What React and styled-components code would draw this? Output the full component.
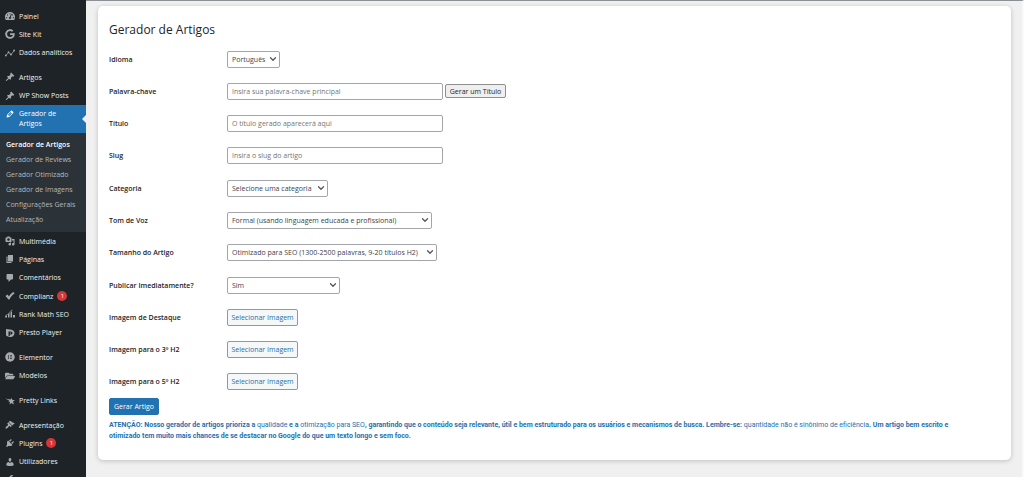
import styled, { createGlobalStyle } from "styled-components";
import { ChevronDown } from "lucide-react";
import { FaFolderOpen, FaGoogle, FaTachometerAlt, FaWrench } from "react-icons/fa";

const PIN =
  "M10.44 3.02l1.82-1.82 6.36 6.35-1.83 1.82c-1.05-.68-2.48-.57-3.41.36l-.75.75c-.92.93-1.04 2.35-.35 3.41l-1.83 1.82-2.41-2.41-2.8 2.79c-.42.42-3.38 2.71-3.8 2.29s1.86-3.39 2.28-3.81l2.79-2.79L4.1 9.36l1.83-1.82c1.05.69 2.48.57 3.4-.36l.75-.75c.93-.92 1.05-2.35.36-3.41z";
const PENCIL =
  "M13.89 3.39l2.71 2.72c.46.46.42 1.24.03 1.64l-8.01 8.02-5.56 1.16 1.16-5.58s7.6-7.63 7.99-8.03c.39-.39 1.22-.39 1.68.07zm-2.73 2.79l-5.59 5.61 1.11 1.11 5.54-5.65zm-2.97 8.23l5.58-5.6-1.07-1.08-5.59 5.6z";
const MEDIA =
  "M13 11V4c0-.55-.45-1-1-1h-1.67L9 1H5L3.67 3H2c-.55 0-1 .45-1 1v7c0 .55.45 1 1 1h10c.55 0 1-.45 1-1zM7 4.5c1.38 0 2.5 1.12 2.5 2.5S8.38 9.5 7 9.5 4.5 8.38 4.5 7 5.62 4.5 7 4.5zM14 6h5v10.5c0 1.38-1.12 2.5-2.5 2.5S14 17.88 14 16.5s1.12-2.5 2.5-2.5c.17 0 .34.02.5.05V9h-3V6zm-4 8.05V13h2v3.5c0 1.38-1.12 2.5-2.5 2.5S7 17.88 7 16.5 8.12 14 9.5 14c.17 0 .34.02.5.05z";
const PAGES = "M6 15V2h10v13H6zm-1 1h8v2H3V5h2v11z";
const COMMENT = "M5 2h9c1.1 0 2 .9 2 2v7c0 1.1-.9 2-2 2h-2l-5 5v-5H5c-1.1 0-2-.9-2-2V4c0-1.1.9-2 2-2z";
const BRUSH =
  "M14.48 11.06L7.41 3.99l1.5-1.5c.5-.56 2.3-.47 3.51.32 1.21.8 1.43 1.28 2.91 2.1 1.18.64 2.45 1.26 4.45.85zm-.71.71L6.7 4.7 4.93 6.47c-.39.39-.39 1.02 0 1.41l1.06 1.06c.39.39.39 1.03 0 1.42-.6.6-1.43 1.11-2.21 1.69-.35.26-.7.53-1.01.84C1.43 14.23.4 16.08 1.4 17.07c.99 1 2.84-.03 4.18-1.36.31-.31.58-.66.85-1.02.57-.78 1.08-1.61 1.69-2.21.39-.39 1.02-.39 1.41 0l1.06 1.06c.39.39 1.02.39 1.41 0z";
const PLUG =
  "M13.11 4.36L9.87 7.6 8 5.73l3.24-3.24c.35-.34 1.05-.2 1.56.32.52.51.66 1.21.31 1.55zm-8 1.77l.91-1.12 9.01 9.01-1.19.84c-.71.71-2.63 1.16-3.82 1.16H6.14L4.9 17.26c-.59.59-1.54.59-2.12 0-.59-.58-.59-1.53 0-2.12l1.24-1.24v-3.88c0-1.13.4-3.19 1.09-3.89zm7.26 3.97l3.24-3.24c.34-.35 1.04-.21 1.55.31.52.51.66 1.21.31 1.55l-3.24 3.25z";
const USER =
  "M10 9.25c-2.27 0-2.73-3.44-2.73-3.44C7 4.02 7.82 2 9.97 2c2.16 0 2.98 2.02 2.71 3.81 0 0-.41 3.44-2.68 3.44zm0 2.57L12.72 10c2.39 0 4.52 2.33 4.52 4.53v2.49s-3.65 1.13-7.24 1.13c-3.65 0-7.24-1.13-7.24-1.13v-2.49c0-2.25 1.94-4.48 4.47-4.48z";
const CHECK = "M1 10l4-3 3 4c2-4 5-7 9-9l2 3c-5 3-8 7-10 12H7z";

function Glyph({ d, children }) {
  return (
    <svg viewBox="0 0 20 20" aria-hidden="true">
      {d ? <path d={d} /> : children}
    </svg>
  );
}

const analytics = (
  <Glyph>
    <path d="M1.500 15L7 9l5 4 6.500-8" fill="none" stroke="currentColor" strokeWidth="1.500" />
    <circle cx="1.800" cy="15" r="1.800" />
    <circle cx="7" cy="8.500" r="1.900" />
    <circle cx="12" cy="13" r="1.900" />
    <circle cx="18.200" cy="5" r="1.800" />
  </Glyph>
);

const rankMath = (
  <Glyph>
    <path d="M1 13h3v4H0zM6 10l3-2v9H6zM11 7l3-3v13h-3zM16 12h4v5h-4z" />
    <path d="M1 13l7-4 4-6 3-1" fill="none" stroke="currentColor" strokeWidth="1.200" />
  </Glyph>
);

const presto = (
  <Glyph>
    <path
      fillRule="evenodd"
      d="M2 2l7 1c6 0 10 3 10 7s-3 8-8 8H8l-6-3zM7 7v10l3-2v-2c4 0 5-1 5-3s-2-3-4-3zM10 9h1c1.500 0 1.500 2 0 2h-1z"
    />
  </Glyph>
);

const elementor = (
  <Glyph>
    <circle cx="10" cy="10" r="9.500" />
    <path d="M7 6v8M10 7h4M10 10h4M10 13h4" fill="none" stroke="#3c4247" strokeWidth="1.700" />
  </Glyph>
);

const prettyLinks = (
  <Glyph>
    <path d="M0 5l11 2 2-3 2 4h5l-4 3 2 6-5-3-4 3 1-5-4-2 3-1z" />
  </Glyph>
);

const groups = [
  {
    height: 55,
    items: [
      { label: "Painel", icon: <FaTachometerAlt /> },
      { label: "Site Kit", icon: <FaGoogle /> },
      { label: "Dados analíticos", icon: analytics },
    ],
  },
  {
    height: 37,
    items: [
      { label: "Artigos", icon: <Glyph d={PIN} /> },
      { label: "WP Show Posts", icon: <Glyph d={PIN} /> },
    ],
  },
  {
    height: 110,
    items: [
      { label: "Multimédia", icon: <Glyph d={MEDIA} /> },
      { label: "Páginas", icon: <Glyph d={PAGES} /> },
      { label: "Comentários", icon: <Glyph d={COMMENT} /> },
      { label: "Complianz", icon: <Glyph d={CHECK} />, count: 1 },
      { label: "Rank Math SEO", icon: rankMath },
      { label: "Presto Player", icon: presto },
    ],
  },
  {
    height: 37,
    items: [
      { label: "Elementor", icon: elementor },
      { label: "Modelos", icon: <FaFolderOpen /> },
    ],
  },
  { height: 19, items: [{ label: "Pretty Links", icon: prettyLinks }] },
  {
    height: 73,
    items: [
      { label: "Apresentação", icon: <Glyph d={BRUSH} /> },
      { label: "Plugins", icon: <Glyph d={PLUG} />, count: 1 },
      { label: "Utilizadores", icon: <Glyph d={USER} /> },
      { name: "Ferramentas", icon: <FaWrench /> },
    ],
  },
];

const submenu = [
  "Gerador de Artigos",
  "Gerador de Reviews",
  "Gerador Otimizado",
  "Gerador de Imagens",
  "Configurações Gerais",
  "Atualização",
];

function MenuGroup({ group }) {
  return (
    <Group $height={group.height}>
      {group.items.map((item) => (
        <li key={item.label || item.name}>
          <MenuLink href="#" aria-label={item.name}>
            <MenuIcon>{item.icon}</MenuIcon>
            {item.label}
            {item.count && <Count>{item.count}</Count>}
          </MenuLink>
        </li>
      ))}
    </Group>
  );
}

function SelectField({ id, label, value, width }) {
  return (
    <Row>
      <Label htmlFor={id}>{label}</Label>
      <SelectBox $width={width}>
        <Select id={id} defaultValue={value}>
          <option>{value}</option>
        </Select>
        <ChevronDown aria-hidden="true" />
      </SelectBox>
    </Row>
  );
}

function TextField({ id, label, placeholder, children }) {
  return (
    <Row>
      <Label htmlFor={id}>{label}</Label>
      <Input id={id} type="text" placeholder={placeholder} />
      {children}
    </Row>
  );
}

function ImageField({ id, label }) {
  return (
    <Row>
      <Label htmlFor={id}>{label}</Label>
      <ImageButton id={id} type="button">
        Selecionar Imagem
      </ImageButton>
    </Row>
  );
}

export default function App() {
  return (
    <Shell>
      <GlobalStyle />
      <Sidebar>
        <MenuGroup group={groups[0]} />
        <Gap />
        <MenuGroup group={groups[1]} />
        <CurrentLink href="#">
          <MenuIcon>
            <Glyph d={PENCIL} />
          </MenuIcon>
          Gerador de Artigos
        </CurrentLink>
        <Submenu>
          {submenu.map((label, i) => (
            <li key={label}>
              <SubLink href="#" $current={i === 0}>
                {label}
              </SubLink>
            </li>
          ))}
        </Submenu>
        <MenuGroup group={groups[2]} />
        <Gap />
        <MenuGroup group={groups[3]} />
        <Gap />
        <MenuGroup group={groups[4]} />
        <Gap />
        <MenuGroup group={groups[5]} />
      </Sidebar>
      <Content>
        <Card>
          <Title>Gerador de Artigos</Title>
          <form>
            <Fields>
              <SelectField id="idioma" label="Idioma" value="Português" width={53} />
              <TextField id="palavra" label="Palavra-chave" placeholder="Insira sua palavra-chave principal">
                <TitleButton type="button">Gerar um Título</TitleButton>
              </TextField>
              <TextField id="titulo" label="Título" placeholder="O título gerado aparecerá aqui" />
              <TextField id="slug" label="Slug" placeholder="Insira o slug do artigo" />
              <SelectField id="categoria" label="Categoria" value="Selecione uma categoria" width={101} />
              <SelectField
                id="tom"
                label="Tom de Voz"
                value="Formal (usando linguagem educada e profissional)"
                width={205}
              />
              <SelectField
                id="tamanho"
                label="Tamanho do Artigo"
                value="Otimizado para SEO (1300-2500 palavras, 9-20 títulos H2)"
                width={210}
              />
              <SelectField id="publicar" label="Publicar Imediatamente?" value="Sim" width={113} />
              <ImageField id="destaque" label="Imagem de Destaque" />
              <ImageField id="imagem3" label="Imagem para o 3º H2" />
              <ImageField id="imagem5" label="Imagem para o 5º H2" />
            </Fields>
            <SubmitButton type="submit">Gerar Artigo</SubmitButton>
          </form>
          <Notice>
            ATENÇÃO: Nosso gerador de artigos prioriza a <span>qualidade</span> e a{" "}
            <span>otimização para SEO</span>, garantindo que o conteúdo seja relevante, útil e bem
            estruturado para os usuários e mecanismos de busca. Lembre-se:{" "}
            <span>quantidade não é sinônimo de eficiência</span>. Um artigo bem escrito e otimizado tem
            muito mais chances de se destacar no Google do que um texto longo e sem foco.
          </Notice>
        </Card>
      </Content>
    </Shell>
  );
}

const GlobalStyle = createGlobalStyle`
  * {
    box-sizing: border-box;
  }

  body {
    margin: 0;
    background: #f0f0f1;
    color: #3c434a;
    font-family: "Segoe UI", "Open Sans", "Noto Sans", sans-serif;
    font-size: 7px;
  }

  button, input, select {
    font: inherit;
  }
`;

const Shell = styled.div`
  display: flex;
  height: 100vh;
  overflow: hidden;
`;

const Sidebar = styled.nav`
  flex: 0 0 86px;
  padding-top: 7px;
  overflow: hidden;
  background: #1d2327;
`;

const Group = styled.ul`
  display: grid;
  grid-auto-rows: 1fr;
  height: ${({ $height }) => $height}px;
  margin: 0;
  padding: 0;
  list-style: none;
`;

const Gap = styled.div`
  height: 6px;
`;

const MenuLink = styled.a`
  display: flex;
  align-items: center;
  height: 100%;
  color: #f0f0f1;
  text-decoration: none;
  white-space: nowrap;
`;

const MenuIcon = styled.span`
  display: flex;
  flex: 0 0 19px;
  justify-content: center;
  color: #a7aaad;

  svg {
    width: 10px;
    height: 10px;
    fill: currentColor;
  }
`;

const Count = styled.span`
  width: 10px;
  height: 10px;
  margin-left: 4px;
  border-radius: 5px;
  background: #d63638;
  color: #fff;
  font-size: 6px;
  line-height: 10px;
  text-align: center;
`;

const CurrentLink = styled.a`
  position: relative;
  display: flex;
  height: 28px;
  padding: 4px 20px 4px 0;
  background: #2271b1;
  color: #fff;
  line-height: 10px;
  text-decoration: none;

  ${MenuIcon} {
    color: #fff;
  }

  &::after {
    content: "";
    position: absolute;
    top: 10px;
    right: 0;
    border: 4px solid transparent;
    border-left: 0;
    border-right-color: #f0f0f1;
  }
`;

const Submenu = styled.ul`
  margin: 0;
  padding: 4px 0 5px;
  background: #2c3338;
  list-style: none;
`;

const SubLink = styled.a`
  display: block;
  padding-left: 6px;
  color: ${({ $current }) => ($current ? "#fff" : "#b4b8bc")};
  font-weight: ${({ $current }) => ($current ? 600 : 400)};
  line-height: 15px;
  text-decoration: none;
  white-space: nowrap;
`;

const Content = styled.main`
  flex: 1;
  min-width: 0;
  padding: 5px 11px 18px 12px;
  border-top: 1px solid #8c8f94;
  border-right: 2px solid #fafafa;
`;

const Card = styled.section`
  padding: 14px 11px 18px;
  border-radius: 5px;
  background: #fff;
  box-shadow: 0 1px 5px rgba(0, 0, 0, 0.2);
`;

const Title = styled.h1`
  margin: 0;
  color: #1d2327;
  font-size: 12px;
  font-weight: 400;
  line-height: 20px;
`;

const Fields = styled.div`
  display: grid;
  grid-auto-rows: 1fr;
  height: 358px;
  padding-top: 3px;
`;

const Row = styled.div`
  display: flex;
  align-items: center;
`;

const Label = styled.label`
  flex: 0 0 118px;
  color: #1d2327;
  font-weight: 600;
`;

const SelectBox = styled.div`
  position: relative;
  width: ${({ $width }) => $width}px;

  svg {
    position: absolute;
    top: 3px;
    right: 2px;
    width: 10px;
    height: 10px;
    color: #50575e;
    stroke-width: 3px;
    pointer-events: none;
  }
`;

const Select = styled.select`
  display: block;
  width: 100%;
  height: 17px;
  padding: 0 0 0 4px;
  appearance: none;
  border: 1px solid #a3a5a9;
  border-radius: 2px;
  background: #fff;
  color: #3c434a;
`;

const Input = styled.input`
  width: 216px;
  height: 17px;
  padding: 0 4px;
  border: 1px solid #a3a5a9;
  border-radius: 2px;
  background: #fff;
  color: #3c434a;

  &::placeholder {
    color: #757575;
  }
`;

const Button = styled.button`
  padding: 0;
  border: 1px solid #2271b1;
  border-radius: 2px;
  white-space: nowrap;
  cursor: pointer;
`;

const TitleButton = styled(Button)`
  width: 61px;
  height: 14px;
  margin-left: 2px;
  border-color: #8f8f8f;
  background: #efefef;
  color: #1d1d1d;
`;

const ImageButton = styled(Button)`
  width: 71px;
  height: 17px;
  border-color: #6ea1cb;
  background: #f6f7f7;
  color: #2271b1;
`;

const SubmitButton = styled(Button)`
  display: block;
  width: 50px;
  height: 17px;
  background: #2271b1;
  color: #fff;
`;

const Notice = styled.p`
  margin: 5px 0 0;
  padding-right: 22px;
  color: #2271b1;
  font-family: "Segoe UI", Roboto, sans-serif;
  font-weight: 700;
  line-height: 11px;

  span {
    font-weight: 400;
  }
`;
